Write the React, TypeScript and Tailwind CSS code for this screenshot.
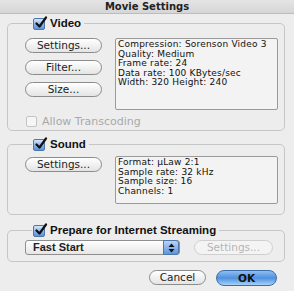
import React from "react";

const FONT = { fontFamily: '"DejaVu Sans", "Liberation Sans", sans-serif' };
const LABEL = { fontFamily: '"Liberation Sans", Arial, sans-serif' };

function Check({ disabled = false }: { disabled?: boolean }) {
  if (disabled) {
    return <span className="inline-block w-[11px] h-[11px] rounded-[2px] border border-[#c4c4c4] bg-[#f6f6f6]" />;
  }
  return (
    <span className="relative inline-block shrink-0 w-[12px] h-[12px] rounded-[2px] border border-[#4d76ad] bg-gradient-to-b from-[#d6e6fa] via-[#8db6ea] to-[#5b93dc]">
      <svg className="absolute -top-[3px] left-[0px]" width="14" height="14" viewBox="0 0 14 14">
        <path d="M2.5 7.5 L5.5 10.5 L12 1.5" fill="none" stroke="#111" strokeWidth="2.2" strokeLinecap="round" strokeLinejoin="round" />
      </svg>
    </span>
  );
}

function AquaButton({ label, disabled = false, width }: { label: string; disabled?: boolean; width: string }) {
  return (
    <button
      className={`${width} h-[15px] rounded-full border text-[10.5px] leading-none flex items-center justify-center ${
        disabled
          ? "border-[#cfcfcf] bg-[#f4f4f4] text-[#b4b4b4]"
          : "border-[#8c8c8c] bg-gradient-to-b from-[#ffffff] to-[#e4e4e4] text-[#222]"
      }`}
    >
      {label}
    </button>
  );
}

function Group({ label, children, className }: { label: string; children: React.ReactNode; className: string }) {
  return (
    <fieldset className={`border border-[#c6c6c6] rounded-[5px] ${className}`}>
      <legend className="ml-[7px] px-[1px] flex items-center gap-[5px]">
        <Check />
        <span className="text-[11.5px] leading-[13px] font-bold text-[#111] pr-[2px]" style={LABEL}>
          {label}
        </span>
      </legend>
      {children}
    </fieldset>
  );
}

function InfoBox({ lines, className }: { lines: string[]; className: string }) {
  return (
    <div className={`border border-[#9a9a9a] rounded-[2px] bg-[#f3f3f3] pl-[2px] pt-[1px] ${className}`}>
      {lines.map((l) => (
        <div key={l} className="text-[9px] leading-[9.5px] tracking-[0.2px] text-[#111] whitespace-nowrap">
          {l}
        </div>
      ))}
    </div>
  );
}

export default function App() {
  return (
    <div className="w-[294px] h-[291px] bg-[#ededed] overflow-hidden" style={FONT}>
      {/* Title bar */}
      <div className="h-[14px] bg-gradient-to-b from-[#e4e4e4] to-[#d6d6d6] border-b border-[#bcbcbc] flex items-center justify-center">
        <span className="text-[10px] font-bold text-[#222]">Movie Settings</span>
      </div>

      <div className="px-[7px] pt-[3px]">
        {/* Video */}
        <Group label="Video" className="w-[278px] h-[114px] pl-[17px] pr-[5px]">
          <div className="flex mt-[8px]">
            <div className="flex flex-col gap-[7px]">
              <AquaButton label="Settings..." width="w-[77px]" />
              <AquaButton label="Filter..." width="w-[77px]" />
              <AquaButton label="Size..." width="w-[77px]" />
            </div>
            <InfoBox
              className="ml-[13px] w-[163px] h-[72px]"
              lines={[
                "Compression: Sorenson Video 3",
                "Quality: Medium",
                "Frame rate: 24",
                "Data rate: 100 KBytes/sec",
                "Width: 320 Height: 240",
              ]}
            />
          </div>
          <div className="flex items-center gap-[5px] mt-[5px] ml-[1px]">
            <Check disabled />
            <span className="text-[11px] leading-[13px] text-[#a9a9a9]">Allow Transcoding</span>
          </div>
        </Group>

        {/* Sound */}
        <Group label="Sound" className="w-[278px] h-[77px] mt-[7px] pl-[17px] pr-[5px]">
          <div className="flex mt-[6px]">
            <AquaButton label="Settings..." width="w-[77px]" />
            <InfoBox
              className="ml-[13px] w-[163px] h-[48px] -mt-[1px]"
              lines={["Format: µLaw 2:1", "Sample rate: 32 kHz", "Sample size: 16", "Channels: 1"]}
            />
          </div>
        </Group>

        {/* Streaming */}
        <Group label="Prepare for Internet Streaming" className="w-[278px] h-[38px] mt-[9px] pl-[17px] pr-[5px]">
          <div className="flex items-center mt-[3px]">
            <div className="relative w-[155px] h-[15px] rounded-[3px] border border-[#8f8f8f] bg-gradient-to-b from-[#ffffff] to-[#e6e6e6] flex items-center pl-[7px]">
              <span className="text-[11px] font-bold text-[#222]" style={LABEL}>
                Fast Start
              </span>
              <span className="absolute right-[0px] top-[-1px] w-[16px] h-[15px] rounded-r-[3px] border border-[#4d76ad] bg-gradient-to-b from-[#b9d4f6] to-[#5c94dd] flex flex-col items-center justify-center">
                <svg width="7" height="10" viewBox="0 0 7 10">
                  <path d="M3.5 0.5 L6.5 4 H0.5 Z M3.5 9.5 L6.5 6 H0.5 Z" fill="#111" />
                </svg>
              </span>
            </div>
            <div className="ml-[14px]">
              <AquaButton label="Settings..." width="w-[79px]" disabled />
            </div>
          </div>
        </Group>

        {/* Bottom buttons */}
        <div className="flex justify-end gap-[10px] mt-[8px] pr-[10px]">
          <AquaButton label="Cancel" width="w-[57px]" />
          <button className="w-[61px] h-[16px] rounded-full border border-[#3b6ea8] bg-gradient-to-b from-[#8fbdf0] via-[#4e91e0] to-[#a7d0f6] text-[10.5px] leading-none font-bold text-[#111] flex items-center justify-center">
            OK
          </button>
        </div>
      </div>
    </div>
  );
}
